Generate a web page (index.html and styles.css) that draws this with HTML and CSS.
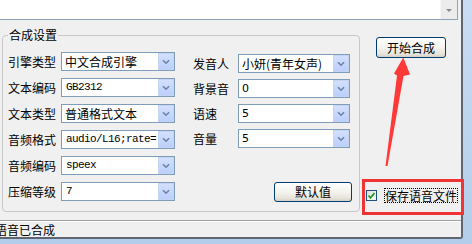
FILE: index.html
```html
<!DOCTYPE html>
<html>
<head>
<meta charset="utf-8">
<link rel="stylesheet" href="styles.css">
</head>
<body>
<div class="window">
  <div class="textarea">
    <div class="sb"><span class="sb-arrow"></span></div>
  </div>
  <div class="main">
    <fieldset class="group">
      <legend>合成设置</legend>
      <div class="col left">
        <div class="row"><span class="lbl">引擎类型</span><div class="combo"><span class="val">中文合成引擎</span><span class="dd"><svg width="16" height="17" viewBox="0 0 16 17"><polyline points="4.5,7 8,10.5 11.5,7" fill="none" stroke="#6a82ab" stroke-width="1.8"/></svg></span></div></div>
        <div class="row"><span class="lbl">文本编码</span><div class="combo"><span class="val mono">GB2312</span><span class="dd"><svg width="16" height="17" viewBox="0 0 16 17"><polyline points="4.5,7 8,10.5 11.5,7" fill="none" stroke="#6a82ab" stroke-width="1.8"/></svg></span></div></div>
        <div class="row"><span class="lbl">文本类型</span><div class="combo"><span class="val">普通格式文本</span><span class="dd"><svg width="16" height="17" viewBox="0 0 16 17"><polyline points="4.5,7 8,10.5 11.5,7" fill="none" stroke="#6a82ab" stroke-width="1.8"/></svg></span></div></div>
        <div class="row"><span class="lbl">音频格式</span><div class="combo"><span class="val mono">audio/L16;rate=</span><span class="dd"><svg width="16" height="17" viewBox="0 0 16 17"><polyline points="4.5,7 8,10.5 11.5,7" fill="none" stroke="#6a82ab" stroke-width="1.8"/></svg></span></div></div>
        <div class="row"><span class="lbl">音频编码</span><div class="combo"><span class="val mono">speex</span><span class="dd"><svg width="16" height="17" viewBox="0 0 16 17"><polyline points="4.5,7 8,10.5 11.5,7" fill="none" stroke="#6a82ab" stroke-width="1.8"/></svg></span></div></div>
        <div class="row"><span class="lbl">压缩等级</span><div class="combo"><span class="val mono">7</span><span class="dd"><svg width="16" height="17" viewBox="0 0 16 17"><polyline points="4.5,7 8,10.5 11.5,7" fill="none" stroke="#6a82ab" stroke-width="1.8"/></svg></span></div></div>
      </div>
      <div class="col right">
        <div class="row"><span class="lbl">发音人</span><div class="combo narrow"><span class="val">小妍(青年女声)</span><span class="dd"><svg width="16" height="17" viewBox="0 0 16 17"><polyline points="4.5,7 8,10.5 11.5,7" fill="none" stroke="#6a82ab" stroke-width="1.8"/></svg></span></div></div>
        <div class="row"><span class="lbl">背景音</span><div class="combo narrow"><span class="val sans">0</span><span class="dd"><svg width="16" height="17" viewBox="0 0 16 17"><polyline points="4.5,7 8,10.5 11.5,7" fill="none" stroke="#6a82ab" stroke-width="1.8"/></svg></span></div></div>
        <div class="row"><span class="lbl">语速</span><div class="combo narrow"><span class="val sans">5</span><span class="dd"><svg width="16" height="17" viewBox="0 0 16 17"><polyline points="4.5,7 8,10.5 11.5,7" fill="none" stroke="#6a82ab" stroke-width="1.8"/></svg></span></div></div>
        <div class="row"><span class="lbl">音量</span><div class="combo narrow"><span class="val sans">5</span><span class="dd"><svg width="16" height="17" viewBox="0 0 16 17"><polyline points="4.5,7 8,10.5 11.5,7" fill="none" stroke="#6a82ab" stroke-width="1.8"/></svg></span></div></div>
        <button class="xpbtn default">默认值</button>
      </div>
    </fieldset>
    <div class="side">
      <button class="xpbtn start">开始合成</button>
      <div class="check">
        <span class="box"><svg width="9" height="9" viewBox="0 0 9 9"><polyline points="1.5,4.5 3.5,6.8 7.5,2" fill="none" stroke="#21a121" stroke-width="1.8"/></svg></span>
        <span class="cl">保存语音文件</span>
      </div>
    </div>
  </div>
  <div class="status">语音已合成</div>
</div>
<div class="annot-box"></div>
<svg class="arrow" width="472" height="244" viewBox="0 0 472 244">
  <polygon points="385.5,166 397,75.5 394,73.5 403.3,57.5 410,74.5 403.5,76 387.5,166" fill="#ff3838"/>
</svg>
</body>
</html>
```

FILE: styles.css
```css
* { box-sizing: border-box; }

html, body {
  margin: 0;
  padding: 0;
}

body {
  width: 472px;
  height: 244px;
  overflow: hidden;
  position: relative;
  background: linear-gradient(180deg, #c9ddf3 0%, #b3cdea 100%);
  font-family: "Noto Sans CJK SC", "Liberation Sans", sans-serif;
  font-size: 12px;
  color: #000;
}

.window {
  width: 463px;
  height: 239px;
  background: #f0f0f0;
  border-right: 2px solid #5f6670;
  border-bottom: 2px solid #5f6670;
  border-bottom-right-radius: 3px;
  display: flex;
  flex-direction: column;
}

.textarea {
  height: 20px;
  width: 458px;
  background: #fff;
  border-bottom: 1px solid #8ea4bc;
  border-right: 1px solid #8ea4bc;
  display: flex;
  justify-content: flex-end;
}

.sb {
  width: 17px;
  height: 19px;
  background: #ececec;
  border-left: 1px solid #f6f6f6;
  display: flex;
  align-items: center;
  justify-content: center;
}

.sb-arrow {
  width: 0;
  height: 0;
  border-left: 3px solid transparent;
  border-right: 3px solid transparent;
  border-top: 3px solid #8a8a8a;
  margin-top: 1px;
}

.main {
  display: flex;
  padding-top: 8px;
}

.group {
  margin: 0 0 0 2px;
  width: 358px;
  padding: 10px 0 9px 5px;
  border: 1px solid #c8c8c8;
  border-radius: 4px;
  display: flex;
  min-width: 0;
}

.group legend {
  padding: 0 1px;
  margin: 0;
  line-height: 14px;
  font-size: 12px;
}

.col {
  display: flex;
  flex-direction: column;
}

.col.left {
  gap: 7px;
}

.col.right {
  gap: 6px;
  margin-left: 18px;
  padding-top: 2px;
}

.row {
  display: flex;
  align-items: center;
  height: 19px;
}

.left .lbl { width: 53px; }
.right .lbl { width: 45px; }

.lbl {
  line-height: 14px;
  white-space: nowrap;
}

.combo {
  width: 114px;
  height: 19px;
  border: 1px solid #7f9db9;
  background: #fff;
  display: flex;
  align-items: center;
  justify-content: space-between;
}

.combo.narrow { width: 112px; }

.val {
  padding-left: 3px;
  white-space: nowrap;
  line-height: 15px;
}

.val.mono {
  font-family: "Liberation Mono", "DejaVu Sans Mono", monospace;
  font-size: 11px;
  letter-spacing: -0.6px;
  padding-left: 4px;
}

.val.sans {
  font-family: "DejaVu Sans", "Liberation Sans", sans-serif;
  font-size: 11px;
  padding-left: 3px;
}

.dd {
  width: 16px;
  height: 17px;
  flex: none;
  background: linear-gradient(180deg, #d3e0fd 0%, #bccffa 100%);
  border: 1px solid #c6d4f4;
  display: flex;
  align-items: center;
  justify-content: center;
}

.dd svg { display: block; }

.xpbtn {
  font-family: "Noto Sans CJK SC", sans-serif;
  font-size: 12px;
  color: #000;
  border: 1px solid #003c74;
  border-radius: 3px;
  background: linear-gradient(180deg, #ffffff 0%, #f4f3ee 50%, #e6e3da 85%, #d6d0c5 100%);
  padding: 0;
  line-height: 16px;
}

.xpbtn.start {
  width: 70px;
  height: 21px;
  margin: 9px 0 0 16px;
}

.xpbtn.default {
  width: 78px;
  height: 20px;
  margin: 28px 0 0 81px;
}

.side {
  display: flex;
  flex-direction: column;
  align-items: flex-start;
}

.check {
  display: flex;
  align-items: center;
  margin: 130px 0 0 6px;
  height: 14px;
}

.box {
  width: 11px;
  height: 11px;
  border: 1px solid #1c5180;
  background: linear-gradient(135deg, #dcdcd7 0%, #ffffff 100%);
  display: flex;
  align-items: center;
  justify-content: center;
}

.box svg { display: block; }

.cl {
  margin-left: 8px;
  line-height: 13px;
  outline: 1px dotted #000;
  outline-offset: 0;
}

.status {
  margin-top: 8px;
  border-top: 1px solid #a0a0a0;
  box-shadow: inset 0 1px 0 #ffffff;
  flex: 1;
  padding-top: 2px;
  line-height: 14px;
  text-indent: -5px;
  white-space: nowrap;
  overflow: hidden;
}

.annot-box {
  position: absolute;
  left: 362px;
  top: 179px;
  width: 102px;
  height: 36px;
  border: 3px solid #ee3434;
}

.arrow {
  position: absolute;
  left: 0;
  top: 0;
  pointer-events: none;
}
```
